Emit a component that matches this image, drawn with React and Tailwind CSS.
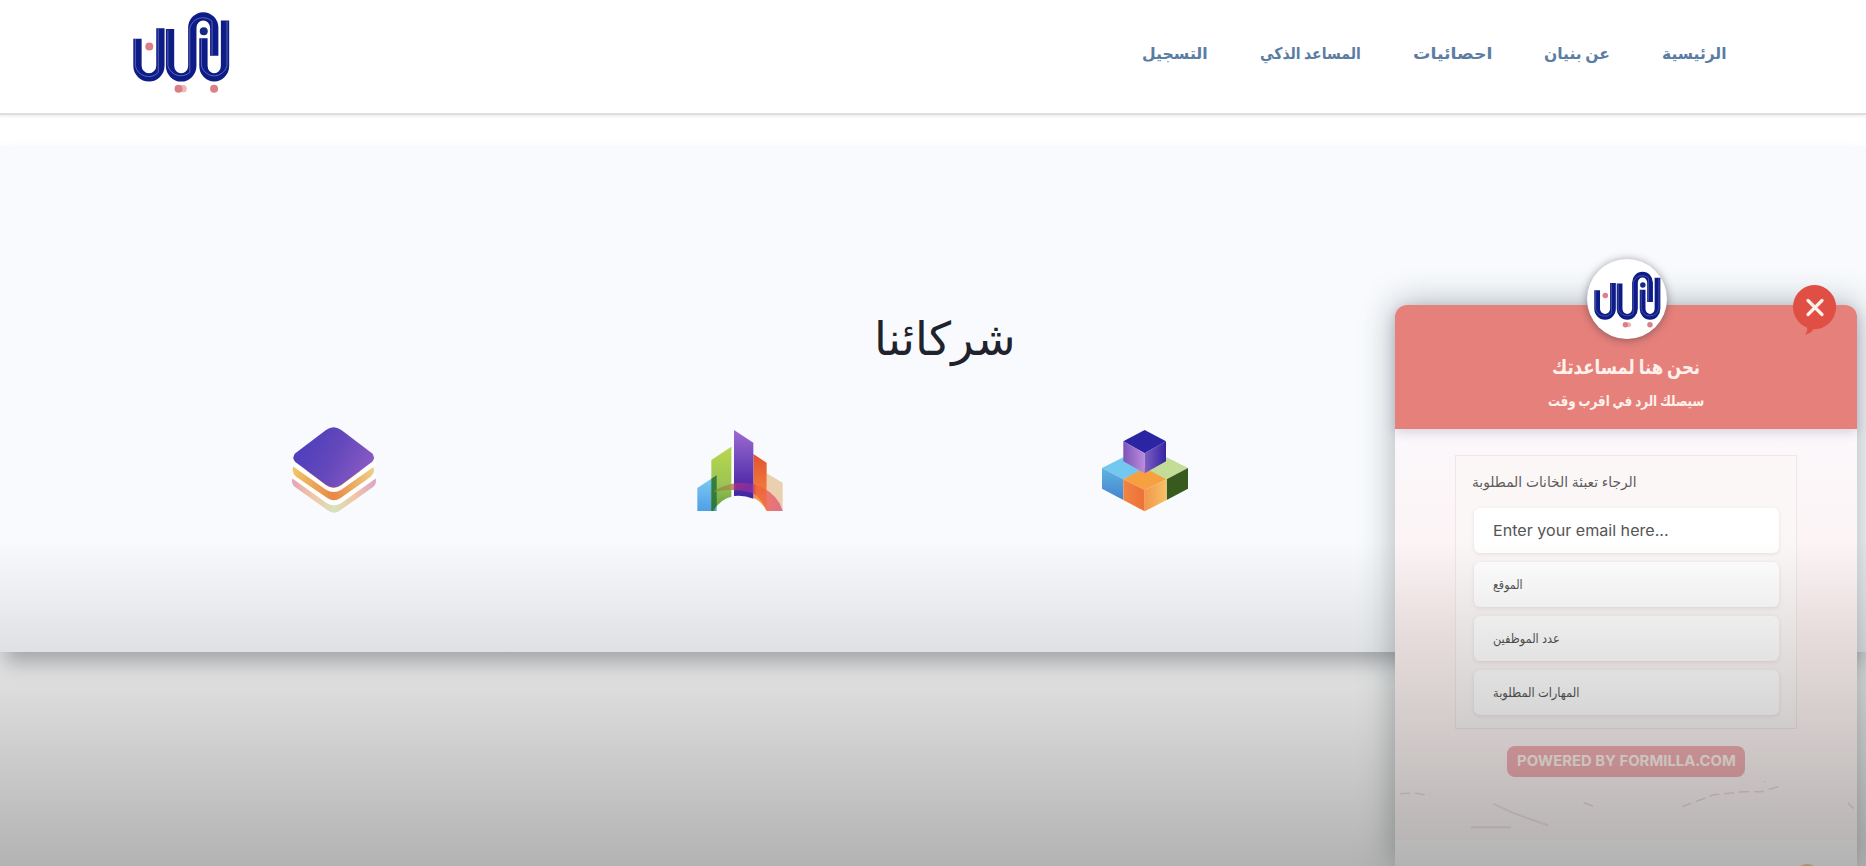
import { useLayoutEffect, useRef, useState } from "react";

/* Text stretched horizontally so that it fills the width of its box. */
function Fit({ children, className = "", rtl = true }) {
  const box = useRef(null);
  const text = useRef(null);
  const [scale, setScale] = useState(1);
  useLayoutEffect(() => {
    setScale(box.current.clientWidth / text.current.offsetWidth);
  }, []);
  return (
    <span ref={box} dir="ltr" className={"block whitespace-nowrap " + className}>
      <span
        ref={text}
        dir={rtl ? "rtl" : "ltr"}
        className="inline-block origin-left"
        style={{ transform: `scaleX(${scale})` }}
      >
        {children}
      </span>
    </span>
  );
}

function Logo({ className }) {
  return (
    <svg viewBox="60 25 310 260" className={className} fill="none">
      <g stroke="#0d1c86" strokeWidth="25">
        <path d="M82.500 117V198a34.500 35 0 0 0 69 0V85" />
        <path d="M180.500 87V198a33.500 35 0 0 0 67 0V84a33 35 0 0 1 66 0V168" />
        <path d="M281 115V198a32.500 35 0 0 0 65 0V62" />
      </g>
      <g stroke="#8f97cf" strokeWidth="1.800">
        <path d="M76 117V198a41 42 0 0 0 69 20V87" />
        <path d="M174 89V198a41 42 0 0 0 66 20V84a41 42 0 0 1 67-20V166" />
        <path d="M275 117V198a40 42 0 0 0 77 0V64" />
      </g>
      <circle cx="282" cy="94" r="12" fill="#142a83" />
      <circle cx="118" cy="140" r="12" fill="#da7f86" />
      <circle cx="220" cy="267" r="11" fill="#efb5b8" />
      <circle cx="206" cy="267" r="12" fill="#da7f86" />
      <circle cx="313" cy="267" r="12" fill="#da7f86" />
    </svg>
  );
}

function Layers() {
  return (
    <svg viewBox="-6 0 450 360" className="h-[120px] w-[150px]">
      <defs>
        <linearGradient id="l1" x1="0" y1="0.3" x2="1" y2="0.7">
          <stop offset="0" stopColor="#4b3dbd" />
          <stop offset="0.5" stopColor="#6448bb" />
          <stop offset="1" stopColor="#8d5cc5" />
        </linearGradient>
        <linearGradient id="l2">
          <stop offset="0" stopColor="#efc766" />
          <stop offset="0.5" stopColor="#e98746" />
          <stop offset="1" stopColor="#eed083" />
        </linearGradient>
        <linearGradient id="l3">
          <stop offset="0" stopColor="#e3a5b5" />
          <stop offset="0.25" stopColor="#f2c6a5" />
          <stop offset="0.5" stopColor="#d5e3bd" />
          <stop offset="0.75" stopColor="#f3c5a3" />
          <stop offset="1" stopColor="#d9a6c8" />
        </linearGradient>
      </defs>
      <path d="M96 212q0-14 14-12L222 260 334 200q14-2 14 12 0 12-10 20L242 300q-20 16-40 0L106 232q-10-8-10-20z" fill="url(#l3)" />
      <path d="M96 190L200 262q22 14 44 0L348 190V205L244 279q-22 14-44 0L96 205z" fill="#fff" />
      <path d="M98 178q0-12 14-10L222 220 330 168q12 0 12 14 0 8-8 16L242 264q-20 14-40 0L108 200q-10-8-10-22z" fill="url(#l2)" />
      <path d="M94 148L198 226q22 16 46 0L348 148V166L244 239q-22 14-46 0L94 166z" fill="#fff" />
      <path d="M198 60q23-16 46 0L336 130q12 13 0 26L244 224q-23 16-46 0L106 156q-12-13 0-26z" fill="url(#l1)" />
    </svg>
  );
}

function Towers() {
  return (
    <svg viewBox="-18 0 450 360" className="h-[120px] w-[150px]">
      <defs>
        <linearGradient id="t1" x2="0" y2="1">
          <stop offset="0" stopColor="#a06ad0" />
          <stop offset="0.5" stopColor="#6945b8" />
          <stop offset="0.8" stopColor="#552aa9" />
          <stop offset="1" stopColor="#3929a5" />
        </linearGradient>
        <linearGradient id="t2" x2="0" y2="1">
          <stop offset="0" stopColor="#b7d84b" />
          <stop offset="0.6" stopColor="#9cc356" />
          <stop offset="1" stopColor="#5e9c3b" />
        </linearGradient>
        <linearGradient id="t3" x2="0" y2="1">
          <stop offset="0" stopColor="#80cdf2" />
          <stop offset="1" stopColor="#4f9fe6" />
        </linearGradient>
        <linearGradient id="t4" x2="0" y2="1">
          <stop offset="0" stopColor="#e0532f" />
          <stop offset="0.6" stopColor="#f0793b" />
          <stop offset="1" stopColor="#f6bd66" />
        </linearGradient>
        <linearGradient id="t5" x1="0" x2="1">
          <stop offset="0" stopColor="#6c9a3c" />
          <stop offset="0.25" stopColor="#b0843f" />
          <stop offset="0.32" stopColor="#a5307f" />
          <stop offset="0.55" stopColor="#8d2fa6" />
          <stop offset="0.62" stopColor="#f4622d" />
          <stop offset="1" stopColor="#dc4f87" />
        </linearGradient>
      </defs>
      <path d="M82 234L140 196V303H82z" fill="url(#t3)" />
      <path d="M290 190L338 218V303H290z" fill="#ead0ae" />
      <path d="M124 150L184 110V260Q150 268 130 303H124z" fill="url(#t2)" />
      <path d="M124 206L140 196V285L130 303H124z" fill="#23713a" opacity="0.85" />
      <path d="M250 132L290 158V303Q272 272 250 264z" fill="url(#t4)" />
      <path d="M192 60L250 98V266Q220 254 192 258z" fill="url(#t1)" />
      <path d="M132 242Q210 200 276 232 326 258 338 303H290Q274 266 250 250 190 232 132 246z" fill="url(#t5)" opacity="0.75" />
    </svg>
  );
}

function Cubes() {
  return (
    <svg viewBox="0 0 450 360" className="h-[120px] w-[150px]">
      <defs>
        <linearGradient id="c1">
          <stop offset="0" stopColor="#7b55b8" />
          <stop offset="1" stopColor="#bd8bdb" />
        </linearGradient>
        <linearGradient id="c2">
          <stop offset="0" stopColor="#7d5fc4" />
          <stop offset="1" stopColor="#3723a2" />
        </linearGradient>
        <linearGradient id="c3">
          <stop offset="0" stopColor="#f3974a" />
          <stop offset="1" stopColor="#f5c268" />
        </linearGradient>
        <linearGradient id="c4">
          <stop offset="0" stopColor="#f08542" />
          <stop offset="1" stopColor="#ee7038" />
        </linearGradient>
        <linearGradient id="c5" x2="0" y2="1">
          <stop offset="0" stopColor="#5fb3e3" />
          <stop offset="1" stopColor="#4583cd" />
        </linearGradient>
      </defs>
      <path d="M96 174L160 142 226 178 160 208z" fill="#72c8ee" />
      <path d="M96 174L160 208V270L96 236z" fill="url(#c5)" />
      <path d="M290 142L354 174 290 208 226 178z" fill="#c3dc98" />
      <path d="M354 174V236L290 270V208z" fill="#385a1e" />
      <path d="M160 208L224 174 290 208 224 240z" fill="#f6a03f" />
      <path d="M160 208L224 240V304L160 270z" fill="url(#c4)" />
      <path d="M290 208V270L224 304V240z" fill="url(#c3)" />
      <path d="M160 94L224 60 288 94 224 130z" fill="#2b24a3" />
      <path d="M160 94L224 130V190L160 154z" fill="url(#c1)" />
      <path d="M288 94V154L224 190V130z" fill="url(#c2)" />
    </svg>
  );
}

function Field({ children }) {
  return (
    <div className="flex h-[45px] items-center rounded-md bg-white pl-[19px] pt-px text-[#555] shadow-[0_1px_4px_rgba(90,50,60,0.12)]">
      {children}
    </div>
  );
}

function ChatWidget() {
  return (
    <aside className="absolute left-[1395px] top-[305px] flex h-[561px] w-[462px] flex-col rounded-t-xl bg-[#fdf4f4] shadow-[0_0_34px_rgba(40,60,60,0.38)]">
      <header className="relative z-10 flex h-[124px] shrink-0 flex-col items-center rounded-t-xl bg-[#e6807b] pt-[45px] text-[#fff1ec] shadow-[0_3px_12px_rgba(80,60,110,0.22)]">
        <Fit className="h-[34px] w-[148px] text-[20px] font-bold leading-[34px]">نحن هنا لمساعدتك</Fit>
        <Fit className="mt-[3px] h-[28px] w-[156px] text-[15px] font-bold leading-[28px]">سيصلك الرد في اقرب وقت</Fit>
        <div className="absolute -top-[46px] left-[192px] flex size-[80px] items-center justify-center rounded-full bg-white shadow-[0_1px_8px_rgba(50,50,60,0.5)]">
          <Logo className="h-[60px] w-[71px]" />
        </div>
        <svg viewBox="0 0 46 52" className="absolute -top-[20px] left-[397px] h-[52px] w-[46px]">
          <path d="M23 0a22 22 0 1 1-2 44.200Q21 47 13 50 16 46 15 42.500A22 22 0 0 1 23 0z" fill="#e04f43" />
          <path d="M16 15.500L30 29.500M30 15.500L16 29.500" stroke="#fff1ea" strokeWidth="3.200" strokeLinecap="round" />
        </svg>
      </header>
      <div className="flex h-[411px] shrink-0 flex-col items-center bg-linear-to-b from-[#fbf8fb] via-[#fdf1f1] to-[#fffaf9] pt-[26px]">
        <div className="flex h-[278px] w-[342px] flex-col border border-[#f0e6e7] bg-[#fcf7f7] pl-[18px] pr-[17px] pt-[12px]">
          <Fit className="-ml-[2px] h-[28px] w-[165px] text-[14px] leading-[28px] text-[#5c5c5c]">الرجاء تعبئة الخانات المطلوبة</Fit>
          <div className="mt-[12px] flex flex-col gap-[9px]">
            <Field>
              <Fit rtl={false} className="w-[176px] text-[15px]">Enter your email here...</Fit>
            </Field>
            <Field>
              <Fit className="w-[30px] text-[12.500px]">الموقع</Fit>
            </Field>
            <Field>
              <Fit className="w-[67px] text-[12.500px]">عدد الموظفين</Fit>
            </Field>
            <Field>
              <Fit className="w-[86px] text-[12.500px]">المهارات المطلوبة</Fit>
            </Field>
          </div>
        </div>
        <div className="mt-[13px] flex h-[31px] w-[238px] translate-y-[4px] items-center justify-center rounded-lg bg-[#f4b1b5] text-[#fff5ee]">
          <Fit rtl={false} className="w-[219px] text-[15px] font-bold">POWERED BY FORMILLA.COM</Fit>
        </div>
        <svg viewBox="0 0 462 60" className="mt-[8px] h-[60px] w-[462px]" fill="none" stroke="#ecdcda" strokeWidth="1.500">
          <path d="M2 13l14-1 16 3M188 22l14 5M288 26l32-12 30-3M346 11l22 0 20-6" strokeDasharray="10 5" />
          <path d="M96 23l22 10 34 12M74 47h40" strokeWidth="2" opacity="0.7" />
          <path d="M456 22l6 6M370-4l2 5" />
        </svg>
      </div>
      <footer className="flex grow justify-end overflow-hidden bg-white pr-[38px] pt-[24px]">
        <svg viewBox="0 0 24 24" className="size-6 shrink-0">
          <circle cx="12" cy="12" r="12" fill="#f4d39a" />
        </svg>
      </footer>
    </aside>
  );
}

const NAV = [
  ["الرئيسية", "w-[65px]"],
  ["عن بنيان", "w-[66px]"],
  ["احصائيات", "w-[79px]"],
  ["المساعد الذكي", "w-[101px]"],
  ["التسجيل", "w-[66px]"],
];

export default function App() {
  return (
    <div className="relative h-[866px] w-[1866px] overflow-hidden bg-white font-['Inter','DejaVu_Sans',sans-serif]">
      <header className="flex h-[115px] items-start justify-between border-b-2 border-[#e0dce0] pl-[130px] pr-[139px] shadow-[0_1px_3px_rgba(80,50,80,0.12)]">
        <Logo className="mt-[8px] h-[87px] w-[103px]" />
        <nav dir="rtl" className="mt-[37px] flex gap-[52px] text-[16px] font-bold leading-[32px] text-[#5b7da3]">
          {NAV.map(([label, width]) => (
            <Fit key={label} className={width}>{label}</Fit>
          ))}
        </nav>
      </header>
      <main className="mt-[31px] h-[506px] bg-[#f8fafd] pl-[130px] pr-[112px] pt-[152px] shadow-[0_14px_20px_-4px_rgba(40,50,60,0.36)]">
        <h1 className="flex justify-center pl-[6px] text-[#20222c]">
          <Fit className="h-[80px] w-[142px] text-[46px] leading-[80px]">شركائنا</Fit>
        </h1>
        <div className="mt-[32px] grid grid-cols-4 justify-items-center">
          <Layers />
          <Towers />
          <Cubes />
        </div>
      </main>
      <ChatWidget />
      <div className="pointer-events-none absolute inset-x-0 bottom-0 z-20 h-[326px] bg-linear-to-b from-black/0 to-black/30" />
    </div>
  );
}
